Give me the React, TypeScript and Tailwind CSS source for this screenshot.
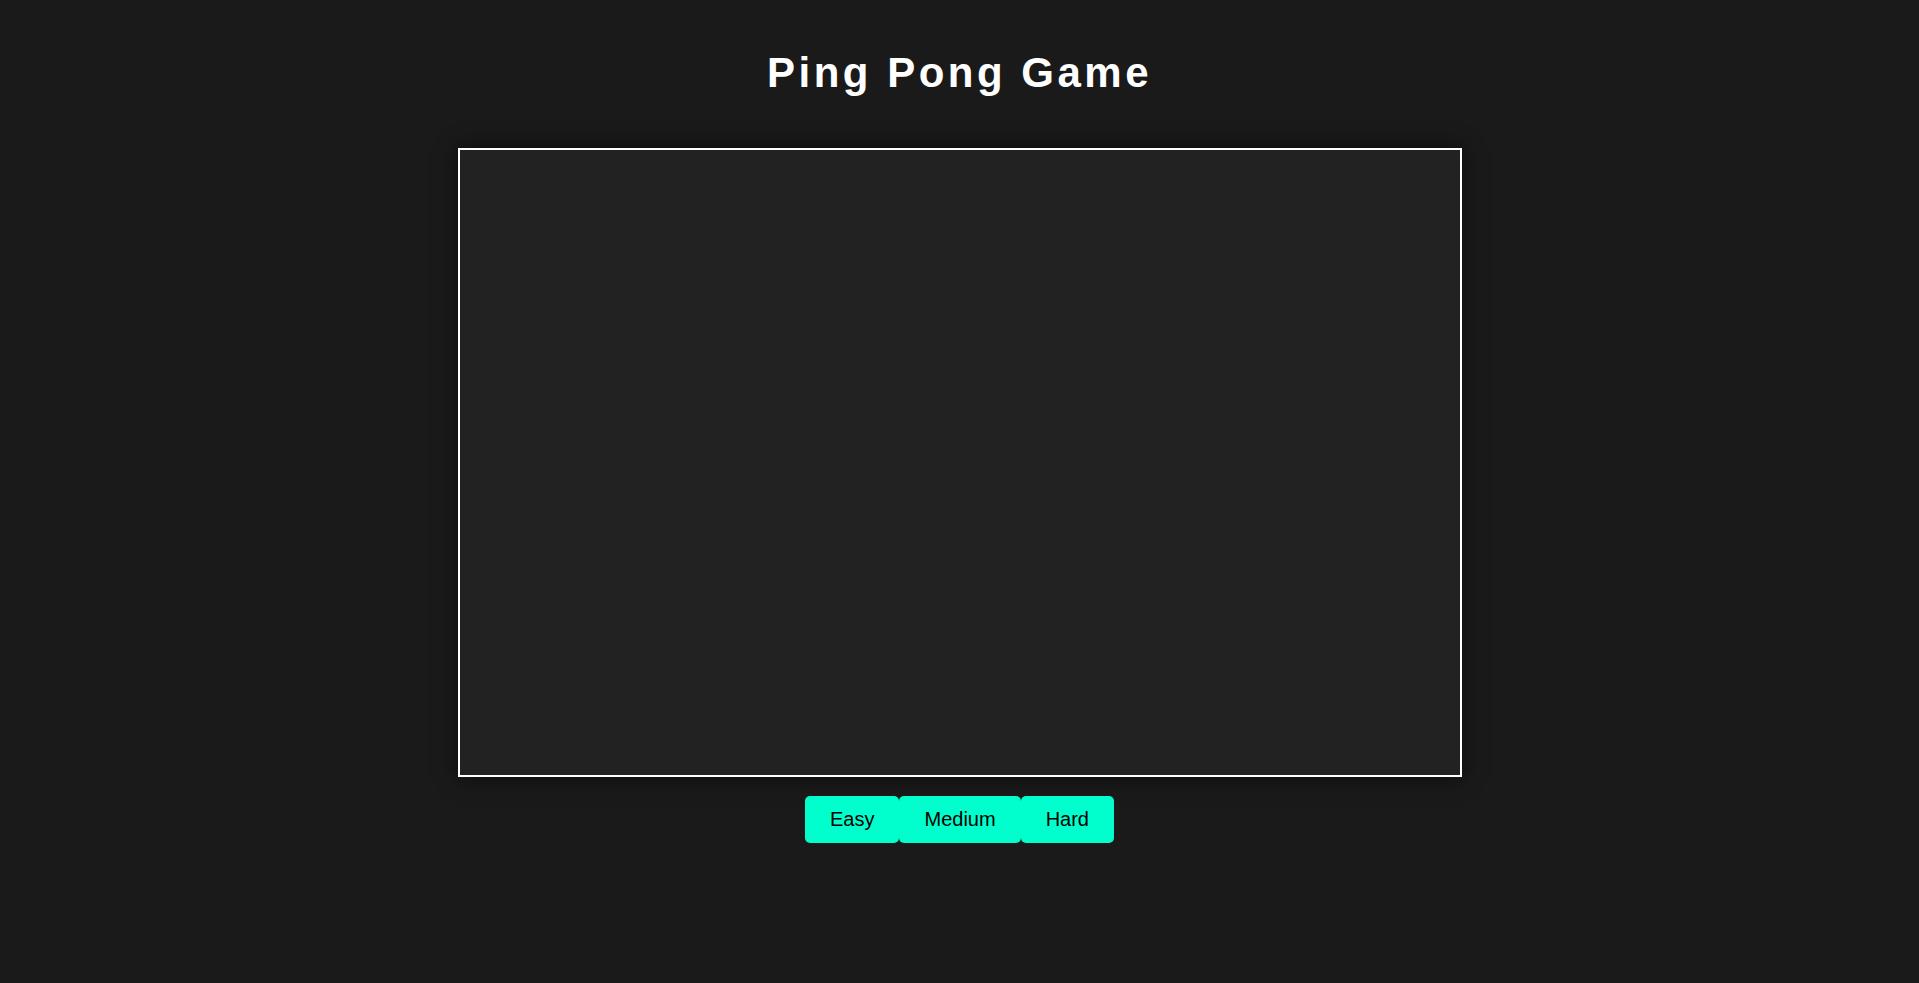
import React from "react";

export default function App() {
  return (
    <div className="min-h-[983px] w-full bg-[#1a1a1a] flex flex-col items-center pt-[49px]" style={{ fontFamily: '"Liberation Sans", Arial, sans-serif' }}>
      <h1 className="text-[42px] leading-[47px] font-bold text-white tracking-[3.5px] m-0">Ping Pong Game</h1>
      <div className="mt-[52px] w-[1004px] h-[629px] border-2 border-white bg-[#222222] shadow-[0_0_20px_rgba(0,0,0,0.6)]" />
      <div className="mt-[19px] flex">
        {["Easy", "Medium", "Hard"].map((l) => (
          <button key={l} className="bg-[#00ffcc] text-black text-[20px] leading-[23px] px-[25px] py-[12px] rounded-[5px]">
            {l}
          </button>
        ))}
      </div>
    </div>
  );
}
